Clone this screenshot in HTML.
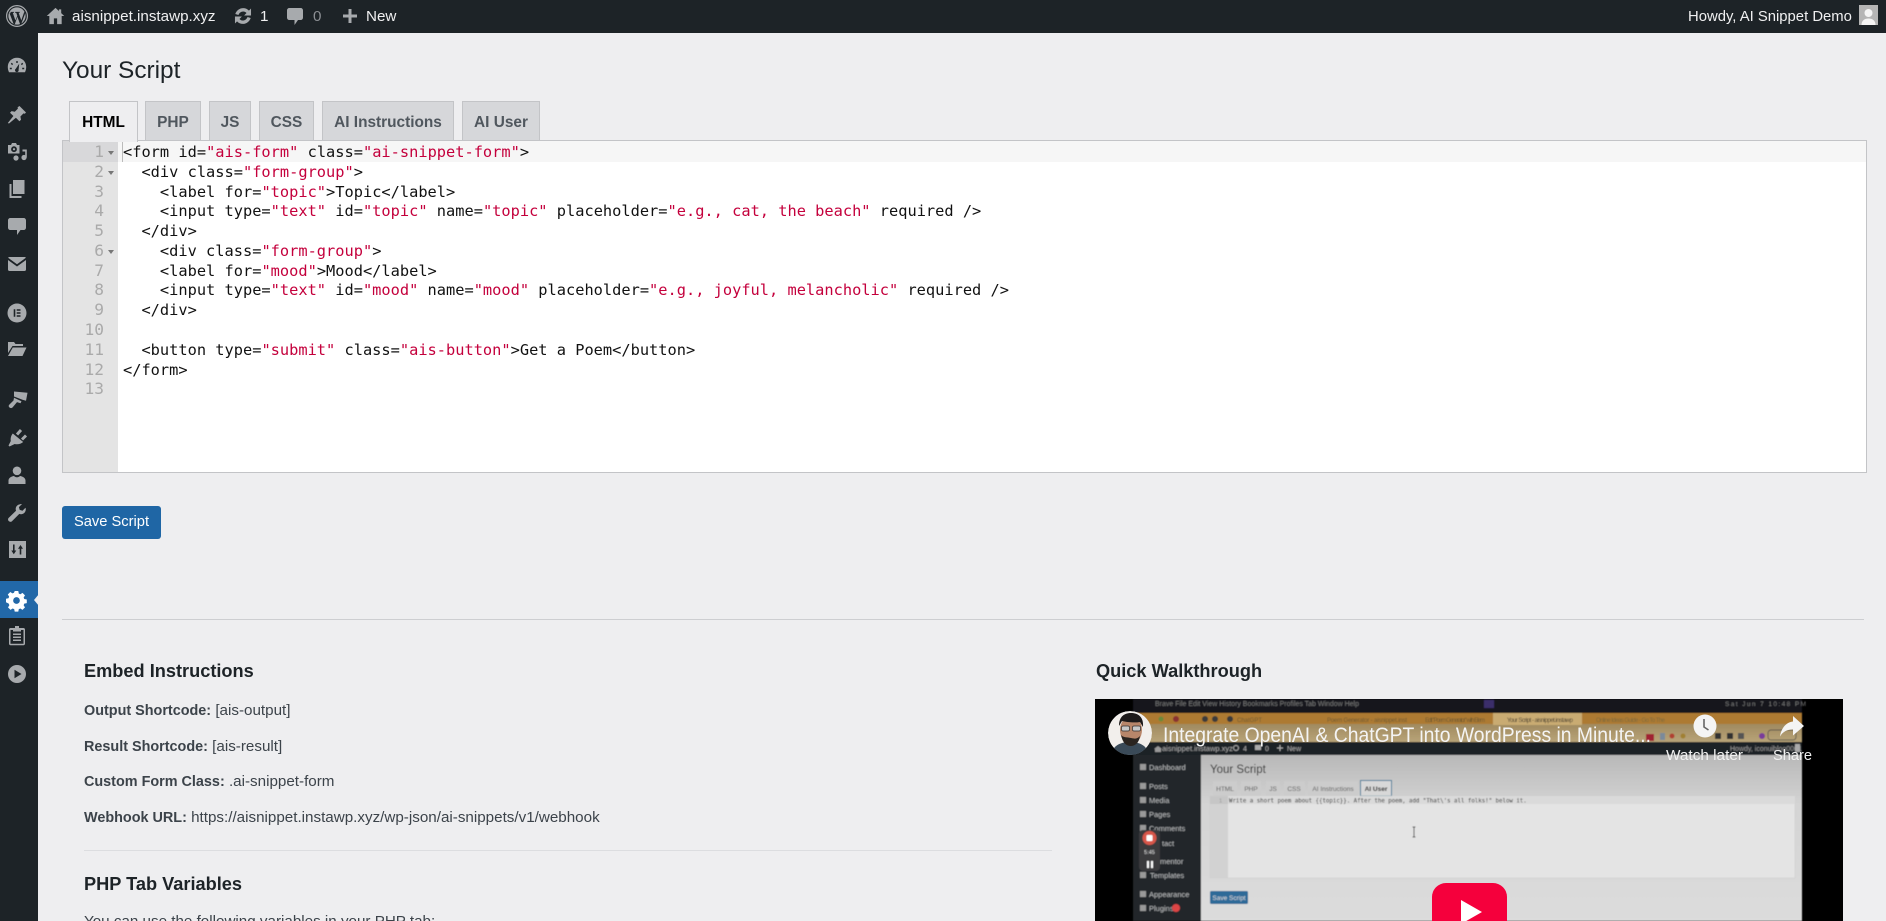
<!DOCTYPE html>
<html lang="en"><head><meta charset="utf-8"><title>Your Script</title>
<style>
html,body{margin:0;padding:0;width:1886px;height:921px;overflow:hidden;background:#eeeef0}
body{position:relative;font-family:"Liberation Sans","DejaVu Sans",sans-serif;font-size:15.6px;color:#3c434a}
.abs,.t{position:absolute;white-space:nowrap}
.bar{position:absolute;left:0;top:0;width:1886px;height:33px;background:#1d2327}
.side{position:absolute;left:0;top:33px;width:38px;height:888px;background:#1d2327}
.bt{position:absolute;top:1px;line-height:32px;font-size:15.2px;color:#f0f0f1;white-space:nowrap}
.ic{position:absolute;overflow:visible}
.ic path,.ic circle,.ic rect{fill:#a7aaad}
.tab{position:absolute;top:101px;height:39px;line-height:41px;box-sizing:border-box;border:1px solid #c3c4c7;border-bottom:0;background:#d6d7da;color:#50575e;font-weight:bold;font-size:15.4px;text-align:center}
.tab.on{background:#eeeef0;color:#000;height:41px;z-index:3}
.ed{position:absolute;left:62px;top:140px;width:1805px;height:333px;box-sizing:border-box;border:1px solid #c3c4c7;background:#fff;overflow:hidden}
.gut{position:absolute;left:0;top:0;width:55px;height:100%;background:#e4e4e4}
.act{position:absolute;left:0;top:0;width:100%;height:21px;background:#f6f6f6}
.actg{position:absolute;left:0;top:0;width:55px;height:21px;background:#d8d8da}
.cur{position:absolute;left:59px;top:0;width:1px;height:21px;background:#bbb}
pre{margin:0;position:absolute;font-family:"DejaVu Sans Mono","Liberation Mono",monospace;font-size:15.33px;line-height:19.78px}
.nums{left:0;top:1px;width:41px;text-align:right;color:#aaa;font-size:16.2px}
.code{left:60px;top:2px;color:#111}
.code b{font-weight:normal;color:#c4003c}
.fold{position:absolute;left:45px;width:0;height:0;border-left:3.5px solid transparent;border-right:3.5px solid transparent;border-top:4px solid #777}
.btn{position:absolute;left:62px;top:506px;width:99px;height:33px;line-height:33px;background:#1f66a5;border-radius:3px;color:#fff;text-align:center;font-size:14.7px}
.hr{position:absolute;background:#cdced1;height:1px}
h2{position:absolute;margin:0;font-size:18.2px;line-height:24px;font-weight:bold;color:#1d2327;white-space:nowrap}
.p{position:absolute;left:84px;line-height:20px;white-space:nowrap;font-size:15.2px;color:#3c434a}
.p b{color:#3c434a;font-size:14.4px}
</style></head><body>

<div class="bar"></div>
<svg class="ic" style="left:6px;top:5px" width="22" height="22" viewBox="0 0 22 22">
<circle cx="11" cy="11" r="10.4" style="fill:none;stroke:#a7aaad;stroke-width:1.2"/>
<circle cx="11" cy="11" r="8.6"/>
<path style="fill:#1d2327" d="M3.6 8.4l3.900 10.400 1.300.5 2.600-7.400 2.700 7.400 1.200-.5 3.600-9.600c.3-1 0-1.800-.6-2.400l-3 8.600-2.700-7.600h1.200V6.900H9.200v1h1.100l1 3-1.900 4.500-2.600-7.500h1.100V6.900H4.500v1h.8z"/>
</svg>
<svg class="ic" style="left:46px;top:6px" width="19" height="20" viewBox="0 0 20 20"><path d="M10 1.500L.8 10h2.700v8.500h4.800v-6h3.400v6h4.800V10h2.700l-3.200-3V3h-2.400v1.800z"/></svg>
<div class="bt" style="left:72px">aisnippet.instawp.xyz</div>
<svg class="ic" style="left:232px;top:5px" width="22" height="22" viewBox="0 0 20 20"><path d="M10.200 2.800c2 0 3.900.8 5.200 2.300l1.900-1.900v6.300h-6.300l2.200-2.200c-.8-.9-1.900-1.400-3-1.400-2 0-3.700 1.300-4.300 3.200L3 8.200C4 5 6.900 2.800 10.200 2.800zM9.800 17.200c-2 0-3.900-.8-5.200-2.300l-1.900 1.900v-6.300h6.300l-2.200 2.200c.8.900 1.900 1.400 3 1.400 2 0 3.700-1.300 4.300-3.200l2.900.9c-1 3.200-3.900 5.400-7.200 5.400z"/></svg>
<div class="bt" style="left:260px">1</div>
<svg class="ic" style="left:285px;top:6px" width="20" height="21" viewBox="0 0 20 21"><path d="M4.500 2h11C17 2 18 3 18 4.500v7c0 1.500-1 2.500-2.500 2.500H13l-3.500 5v-5h-5C3 14 2 13 2 11.500v-7C2 3 3 2 4.500 2z"/></svg>
<div class="bt" style="left:313px;color:#8c8f94">0</div>
<svg class="ic" style="left:340px;top:6px" width="20" height="20" viewBox="0 0 20 20"><path d="M8.500 3h3v5.500H17v3h-5.500V17h-3v-5.500H3v-3h5.500z"/></svg>
<div class="bt" style="left:366px">New</div>
<div class="bt" style="left:1688px;font-size:14.85px">Howdy, AI Snippet Demo</div>
<svg class="ic" style="left:1859px;top:5px" width="19" height="20" viewBox="0 0 19 20"><rect width="19" height="20" style="fill:#b5b5b5"/><circle cx="9.500" cy="8" r="4" style="fill:#f4f4f4"/><path style="fill:#f4f4f4" d="M2.500 20c0-4.500 3-6.500 7-6.500s7 2 7 6.500z"/></svg>

<div class="side"></div>
<svg class="ic" style="left:7px;top:56px" width="20" height="20" viewBox="0 0 20 20"><path fill-rule="evenodd" d="M10 1.800c5 0 9.200 3.800 9.200 9 0 2-.4 3.700-1.200 5.400H2C1.200 14.500.8 12.800.8 10.800c0-5.200 4.200-9 9.200-9zM9.300 5v2h1.400V5zM4.800 6.800l-1 1 1.300 1.300 1-1zM15.200 6.800l-1.300 1.300 1 1 1.300-1.300zM12.200 7.800l-3.400 5a1.800 1.800 0 1 0 2.800 1.100zM2.800 11.800v1.500h2v-1.500zM15.200 11.800v1.500h2v-1.500z"/></svg>
<svg class="ic" style="left:7px;top:105px" width="20" height="20" viewBox="0 0 20 20"><path d="M12.500 1l6.500 6.500-1.200 1.200-1.300-.3-3.100 3.100.6 3.200-1.600 1.600-3.500-3.500L2 18.500.8 18l5.600-7L3 7.700l1.600-1.600 3.200.6 3.100-3.100-.3-1.300z"/></svg>
<svg class="ic" style="left:7px;top:142px" width="21" height="20" viewBox="0 0 21 20"><path fill-rule="evenodd" d="M1 3h3l1-2h4l1 2h2.500v8.500H1zM7 4.300a2.900 2.900 0 1 0 0 5.800 2.900 2.900 0 0 0 0-5.800z"/><circle cx="7" cy="7.200" r="1.100"/><circle cx="9" cy="16" r="2.600"/><circle cx="17" cy="15.500" r="2.600"/><path d="M18.200 8h1.600v7.500h-1.600zM15.500 7.500h4.300V9.500h-4.300z"/></svg>
<svg class="ic" style="left:7px;top:179px" width="20" height="20" viewBox="0 0 20 20"><path d="M6 1h11.500v14H6zM2.500 5H4.500v12h10v2H2.500z"/></svg>
<svg class="ic" style="left:7px;top:216px" width="20" height="20" viewBox="0 0 20 20"><path d="M3.500 2h13C18 2 19 3 19 4.500v7c0 1.500-1 2.500-2.500 2.500H13.500L10 19v-5H3.500C2 14 1 13 1 11.500v-7C1 3 2 2 3.500 2z"/></svg>
<svg class="ic" style="left:7px;top:254px" width="20" height="20" viewBox="0 0 20 20"><path d="M2.500 3h15c.7 0 1.200.3 1.400.8L10 10.300 1.100 3.800C1.300 3.300 1.800 3 2.500 3zM1 6l9 6.500L19 6v9.500c0 .9-.7 1.500-1.500 1.500h-15C1.700 17 1 16.400 1 15.500z"/></svg>
<svg class="ic" style="left:7px;top:303px" width="20" height="20" viewBox="0 0 20 20"><path fill-rule="evenodd" d="M10 .5a9.500 9.500 0 1 1 0 19 9.500 9.500 0 0 1 0-19zM6.700 6.200v7.600h1.600V6.200zM9.700 6.200v1.500h3.800V6.200zM9.700 9.200v1.600h3.800V9.200zM9.700 12.300v1.500h3.800v-1.500z"/></svg>
<svg class="ic" style="left:7px;top:339px" width="20" height="20" viewBox="0 0 20 20"><path d="M1 3h6l1.500 2H16v2H5.500L1 14zM5.800 8.500H19.500L15.500 17H1z"/></svg>
<svg class="ic" style="left:7px;top:390px" width="21" height="20" viewBox="0 0 21 20"><path d="M7 1.500l13.500 1.300-1.500 8-3.500-1L7 6.500z"/><path d="M7 7.800l7.500 3.500-1 2-3.500-1.200L5.500 17.500c-1.300 1.300-4 .2-3.800-1.700.1-.7.500-1.200 1-1.600L6.500 10.500z"/></svg>
<svg class="ic" style="left:7px;top:428px" width="20" height="20" viewBox="0 0 20 20"><path d="M5.800 5.500L16.200 14c-2.500 2-5.500 2.800-8.500 2L2.500 18.500 1.500 17.500l2.300-4.500C3.300 10.300 4.100 7.500 5.800 5.500z"/><path d="M10 6.500L14 2M15 11.500L19 7.500" style="fill:none;stroke:#a7aaad;stroke-width:2.900"/></svg>
<svg class="ic" style="left:7px;top:465px" width="20" height="20" viewBox="0 0 20 20"><circle cx="10" cy="5.800" r="4.300"/><path d="M1.500 19v-3.500c0-2.500 3-4.200 5.500-4.500 1 1 2 1.300 3 1.300s2-.3 3-1.300c2.500.3 5.500 2 5.500 4.500V19z"/></svg>
<svg class="ic" style="left:7px;top:503px" width="20" height="20" viewBox="0 0 20 20"><path d="M13.500 1.200c-2.500 0-4.800 2-4.800 4.800 0 .6.100 1.200.3 1.700L1.800 14.800c-1 1-1 2.400 0 3.300s2.400 1 3.300 0l7.200-7.200c.5.200 1.100.3 1.700.3 2.800 0 4.800-2.300 4.800-4.800 0-.6-.1-1.200-.3-1.700l-3 3-2.800-.8-.8-2.800 3-3c-.4-.2-.9-.1-1.400-.1z"/></svg>
<svg class="ic" style="left:9px;top:541px" width="17" height="17" viewBox="0 0 17 17"><path fill-rule="evenodd" d="M0 0h17v17H0zM4 3.500v6H2.300l2.500 3.800 2.500-3.800H5.600v-6zM11.500 4l-2.500 3.800h1.700v5.700h1.600V7.800h1.700z"/></svg>
<div class="abs" style="left:0;top:581px;width:38px;height:37px;background:#2268a8"></div>
<div class="abs" style="left:34px;top:594px;width:0;height:0;border-top:6px solid transparent;border-bottom:6px solid transparent;border-right:5px solid #eeeef0"></div>
<svg class="ic" style="left:6px;top:590px" width="21" height="21" viewBox="0 0 20 20"><path style="fill:#fff" fill-rule="evenodd" d="M8.300 1h3.400l.5 2.400 1.500.6 2-1.300 2.400 2.400-1.300 2 .6 1.500 2.400.5v3.400l-2.400.5-.6 1.500 1.300 2-2.400 2.400-2-1.300-1.500.6-.5 2.400H8.300l-.5-2.400-1.500-.6-2 1.300-2.400-2.400 1.300-2-.6-1.500L0 11.700V8.300l2.400-.5.6-1.500-1.300-2 2.400-2.400 2 1.300 1.500-.6zM10 6.800a3.200 3.200 0 1 0 0 6.400 3.200 3.200 0 0 0 0-6.400z"/></svg>
<svg class="ic" style="left:7px;top:625px" width="20" height="21" viewBox="0 0 20 21"><path fill-rule="evenodd" d="M8 1h4v2h4.500c.8 0 1.500.7 1.500 1.500v14.300c0 .8-.7 1.500-1.500 1.500h-13C2.700 20.300 2 19.600 2 18.800V4.500C2 3.700 2.700 3 3.500 3H8zM3.500 5v13.800h13V5H14v1.500H6V5zM6 8.500h8V10H6zM6 11.500h8V13H6zM6 14.500h8V16H6z"/></svg>
<svg class="ic" style="left:7px;top:664px" width="20" height="20" viewBox="0 0 20 20"><path fill-rule="evenodd" d="M10 1a9 9 0 1 1 0 18 9 9 0 0 1 0-18zM7.500 5.800v8.400L14.500 10z"/></svg>

<div class="t" style="left:62px;top:55px;font-size:24.4px;line-height:32px;color:#1d2327">Your Script</div>

<div class="tab on" style="left:69px;width:69px">HTML</div>
<div class="tab" style="left:145px;width:56px">PHP</div>
<div class="tab" style="left:209px;width:42px">JS</div>
<div class="tab" style="left:259px;width:55px">CSS</div>
<div class="tab" style="left:322px;width:132px">AI Instructions</div>
<div class="tab" style="left:462px;width:78px">AI User</div>

<div class="ed">
<div class="act"></div><div class="gut"></div><div class="actg"></div><div class="cur"></div>
<pre class="nums">1
2
3
4
5
6
7
8
9
10
11
12
13</pre>
<div class="fold" style="top:10px"></div><div class="fold" style="top:30px"></div><div class="fold" style="top:109px"></div>
<pre class="code">&lt;form id=<b>"ais-form"</b> class=<b>"ai-snippet-form"</b>&gt;
  &lt;div class=<b>"form-group"</b>&gt;
    &lt;label for=<b>"topic"</b>&gt;Topic&lt;/label&gt;
    &lt;input type=<b>"text"</b> id=<b>"topic"</b> name=<b>"topic"</b> placeholder=<b>"e.g., cat, the beach"</b> required /&gt;
  &lt;/div&gt;
    &lt;div class=<b>"form-group"</b>&gt;
    &lt;label for=<b>"mood"</b>&gt;Mood&lt;/label&gt;
    &lt;input type=<b>"text"</b> id=<b>"mood"</b> name=<b>"mood"</b> placeholder=<b>"e.g., joyful, melancholic"</b> required /&gt;
  &lt;/div&gt;

  &lt;button type=<b>"submit"</b> class=<b>"ais-button"</b>&gt;Get a Poem&lt;/button&gt;
&lt;/form&gt;
</pre>
</div>

<div class="btn">Save Script</div>
<div class="hr" style="left:62px;top:619px;width:1802px"></div>

<h2 style="left:84px;top:659px">Embed Instructions</h2>
<h2 style="left:1096px;top:659px">Quick Walkthrough</h2>
<div class="p" style="top:701px"><b>Output Shortcode:</b> [ais-output]</div>
<div class="p" style="top:737px"><b>Result Shortcode:</b> [ais-result]</div>
<div class="p" style="top:772px"><b>Custom Form Class:</b> .ai-snippet-form</div>
<div class="p" style="top:808px"><b>Webhook URL:</b> https://aisnippet.instawp.xyz/wp-json/ai-snippets/v1/webhook</div>
<div class="hr" style="left:84px;top:850px;width:968px;background:#dcdde0"></div>
<h2 style="left:84px;top:872px">PHP Tab Variables</h2>
<div class="p" style="top:912px">You can use the following variables in your PHP tab:</div>

<svg class="abs" style="left:1095px;top:699px" width="748" height="222" viewBox="1095 699 748 222" font-family="Liberation Sans, sans-serif">
<defs>
<linearGradient id="url" x1="0" y1="0" x2="0" y2="1"><stop offset="0" stop-color="#a08a60"/><stop offset="1" stop-color="#b8a478"/></linearGradient>
<linearGradient id="con" x1="0" y1="0" x2="0" y2="1"><stop offset="0" stop-color="#b8b8b8"/><stop offset=".3" stop-color="#d4d4d4"/><stop offset="1" stop-color="#dcdcdc"/></linearGradient>
<filter id="bl"><feGaussianBlur stdDeviation=".45"/></filter>
<clipPath id="av"><circle cx="1130" cy="733" r="22"/></clipPath>
</defs>
<rect x="1095" y="699" width="748" height="222" fill="#000"/>
<g filter="url(#bl)">
<rect x="1133" y="699" width="669" height="222" fill="#15171c"/>
<text x="1155" y="706" font-size="7" fill="#777" textLength="204">Brave  File  Edit  View  History  Bookmarks  Profiles  Tab  Window  Help</text>
<rect x="1484" y="700" width="10" height="8" fill="#3a2f6a"/>
<text x="1725" y="706" font-size="6.500" fill="#777" textLength="81">Sat Jun 7 10:48 PM</text>
<rect x="1133" y="713" width="669" height="12" fill="#ad7a32"/>
<rect x="1133" y="724" width="669" height="18" fill="url(#url)"/>
<rect x="1493" y="713" width="89" height="12" fill="#c9ab72"/>
<text x="1507" y="722" font-size="6" fill="#4a4030" textLength="66">Your Script - aisnippet.instawp</text>
<text x="1327" y="722" font-size="6" fill="#6e5a30" textLength="80">Poem Generator - aisnippet.inst</text>
<text x="1425" y="722" font-size="6" fill="#6e5a30" textLength="60">Edit "Poem Generator" with Elem</text>
<text x="1596" y="722" font-size="6" fill="#7e6a3c" textLength="69">Online Ideas Guide - Go To The</text>
<text x="1237" y="722" font-size="6" fill="#6e5a30">ChatGPT</text>
<circle cx="1161" cy="719" r="2.500" fill="#6a8a3a"/><circle cx="1176" cy="719" r="3" fill="#8a3030"/><circle cx="1205" cy="719" r="3" fill="#3a3a3a"/><circle cx="1215" cy="719" r="3" fill="#3a3a3a"/><circle cx="1230" cy="719" r="3" fill="#3a3a3a"/>
<rect x="1646" y="734" width="8" height="7" fill="#a02030"/><rect x="1660" y="733" width="5" height="7" fill="#7a8a9a"/><circle cx="1672" cy="736" r="2.500" fill="#b04030"/><circle cx="1683" cy="736" r="2.500" fill="#a08030"/><rect x="1715" y="733" width="6" height="6" fill="#333"/><rect x="1727" y="733" width="6" height="6" fill="#333"/><rect x="1738" y="733" width="6" height="6" fill="#555"/><circle cx="1762" cy="736" r="3" fill="#7a3a9a"/>
<rect x="1768" y="730" width="28" height="10" rx="3" fill="none" stroke="#444" stroke-width=".7"/>
<rect x="1133" y="742" width="669" height="13" fill="#1f2327"/>
<path d="M1158 746l-4 3h1v3h6v-3h1z" fill="#999"/>
<text x="1162" y="751" font-size="7.500" fill="#aaa">aisnippet.instawp.xyz</text>
<circle cx="1236" cy="748" r="2.500" fill="none" stroke="#aaa"/><text x="1243" y="751" font-size="7" fill="#aaa">4</text>
<rect x="1255" y="745" width="6" height="5" fill="#aaa"/><text x="1265" y="751" font-size="7" fill="#aaa">0</text>
<path d="M1277 748h6M1280 745v6" stroke="#aaa"/><text x="1287" y="751" font-size="7" fill="#aaa">New</text>
<text x="1730" y="751" font-size="7" fill="#999">Howdy, iconuiblog0001</text>
<rect x="1795" y="744" width="5" height="8" fill="#aaa"/>
<rect x="1133" y="755" width="68" height="166" fill="#24282c"/>
<rect x="1201" y="755" width="601" height="166" fill="url(#con)"/>
<g font-size="7.500" fill="#b5b7b9">
<text x="1149" y="770">Dashboard</text><text x="1149" y="789">Posts</text><text x="1149" y="803">Media</text><text x="1149" y="817">Pages</text><text x="1149" y="831">Comments</text><text x="1162" y="846">tact</text><text x="1160" y="864">mentor</text><text x="1150" y="878">Templates</text><text x="1149" y="897">Appearance</text><text x="1149" y="911">Plugins</text>
</g>
<g fill="#999"><rect x="1140" y="764" width="6" height="6"/><rect x="1140" y="783" width="6" height="6"/><rect x="1140" y="797" width="6" height="6"/><rect x="1140" y="811" width="6" height="6"/><rect x="1140" y="825" width="6" height="6"/><rect x="1140" y="872" width="6" height="6"/><rect x="1140" y="891" width="6" height="6"/><rect x="1140" y="905" width="6" height="6"/></g>
<circle cx="1176" cy="908" r="4" fill="#d44"/>
<text x="1210" y="773" font-size="11.500" fill="#222">Your Script</text>
<g font-size="6.500" fill="#555" text-anchor="middle">
<rect x="1213" y="781" width="24" height="15" fill="#ccc"/><text x="1225" y="791">HTML</text>
<rect x="1241" y="781" width="20" height="15" fill="#ccc"/><text x="1251" y="791">PHP</text>
<rect x="1266" y="781" width="14" height="15" fill="#ccc"/><text x="1273" y="791">JS</text>
<rect x="1284" y="781" width="21" height="15" fill="#ccc"/><text x="1294" y="791">CSS</text>
<rect x="1308" y="781" width="50" height="15" fill="#ccc"/><text x="1333" y="791">AI Instructions</text>
<rect x="1360.500" y="780.500" width="31" height="15.500" fill="#d8d8d8" stroke="#3a7a9a"/><text x="1376" y="791" fill="#111" font-weight="bold">AI User</text>
</g>
<rect x="1210" y="796" width="585" height="82" fill="#e4e4e4" stroke="#ccc" stroke-width=".5"/>
<rect x="1210" y="796" width="18" height="82" fill="#d2d2d2"/>
<rect x="1210" y="796" width="18" height="8" fill="#c6c6c6"/>
<rect x="1228" y="796" width="567" height="8" fill="#dadada"/>
<text x="1219" y="802.500" font-size="5.800" fill="#999">1</text>
<text x="1229" y="802.500" font-size="5.760" font-family="DejaVu Sans Mono, monospace" fill="#222">Write a short poem about {{topic}}. After the poem, add "That\'s all folks!" below it.</text>
<path d="M1412.500 827h3M1412.500 837h3M1414 827v10" stroke="#222" stroke-width=".8" fill="none"/>
<rect x="1210" y="891" width="38" height="13" rx="1.500" fill="#2d6a98"/>
<text x="1229" y="900" font-size="6.500" fill="#ddd" text-anchor="middle">Save Script</text>
<rect x="1139" y="830" width="21" height="41" rx="4" fill="#3a3a3c"/>
<circle cx="1149.500" cy="838" r="7" fill="#d8564a"/><rect x="1146.500" y="835" width="6" height="6" rx="1" fill="#fff"/>
<text x="1149.500" y="854" font-size="5.500" fill="#ddd" text-anchor="middle">5:45</text>
<rect x="1147" y="861" width="2" height="7" fill="#fff"/><rect x="1151" y="861" width="2" height="7" fill="#fff"/>
</g>
<g clip-path="url(#av)">
<circle cx="1130" cy="733" r="22" fill="#f2efec"/>
<path d="M1112 755c0-9 8-13 18-13s18 4 18 13z" fill="#3a4a58"/>
<ellipse cx="1131" cy="730" rx="11" ry="14" fill="#b8866a"/>
<path d="M1119 726c0-10 6-13 12-13s13 3 12 14l-3-5c-6 1-14 0-18-1z" fill="#1d1a1a"/>
<path d="M1121 735c2 9 6 11 10 11s8-3 9-10c-3 3-5 3-9 2s-7 0-10-3z" fill="#2a2420"/>
<rect x="1121.500" y="726" width="8" height="5" rx="1.500" fill="#c8c8c8" stroke="#333" stroke-width=".7"/><rect x="1132.500" y="726" width="8" height="5" rx="1.500" fill="#c8c8c8" stroke="#333" stroke-width=".7"/>
</g>
<text x="1163" y="742" font-size="21.500" fill="#f4f4f4" textLength="488" lengthAdjust="spacingAndGlyphs">Integrate OpenAI &amp; ChatGPT into WordPress in Minute...</text>
<circle cx="1705" cy="726" r="11.500" fill="#f4f4f4"/>
<path d="M1704 719v8l4.500 3" stroke="#666" stroke-width="1.600" fill="none"/>
<path d="M1793 716l11 10-11 9.500v-6c-6 0-10 2-13 7 1-7 5-14 13-15z" fill="#f4f4f4"/>
<text x="1666" y="760" font-size="15" fill="#f0f0f0" textLength="77" lengthAdjust="spacingAndGlyphs">Watch later</text>
<text x="1773" y="760" font-size="15" fill="#f0f0f0" textLength="39" lengthAdjust="spacingAndGlyphs">Share</text>
<rect x="1432" y="883" width="75" height="60" rx="14" fill="#f5003c"/>
<path d="M1461 900v24l21-12z" fill="#fff"/>
</svg>
</body></html>
